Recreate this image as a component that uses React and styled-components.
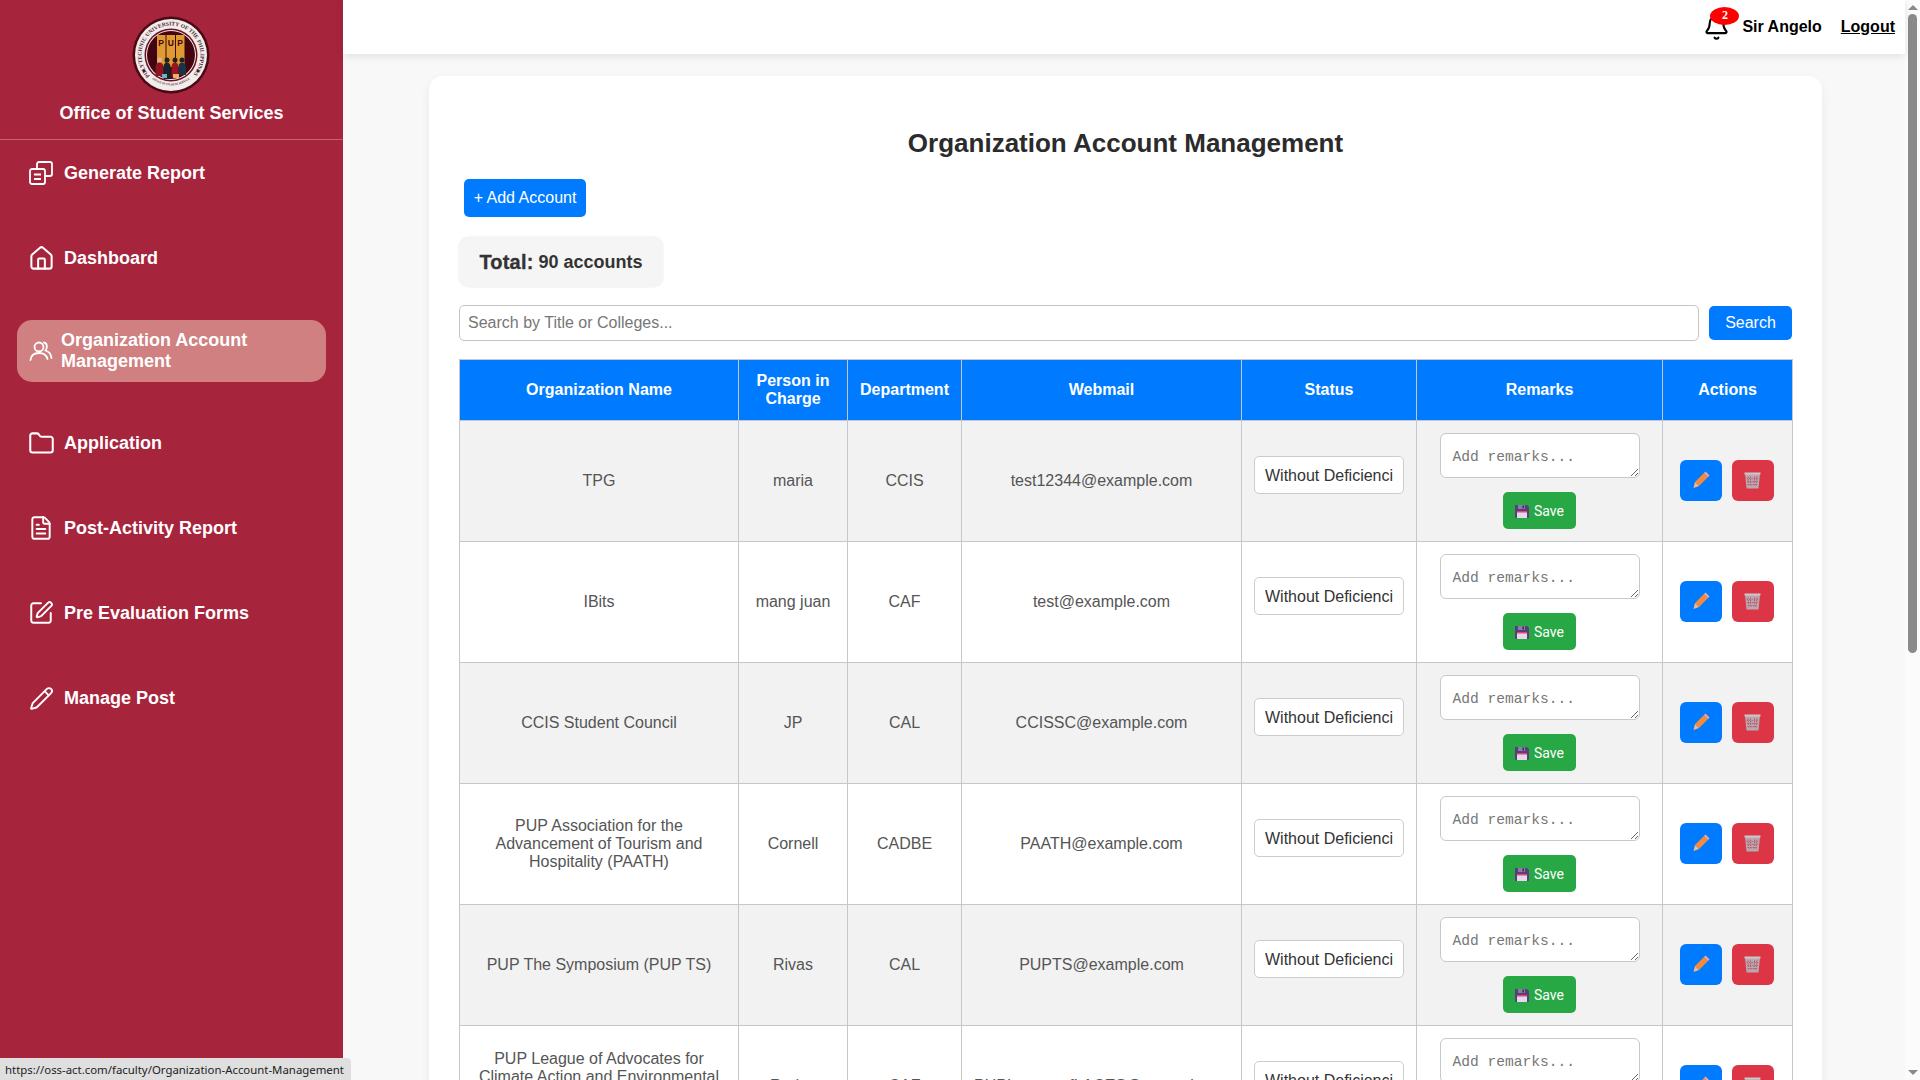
import styled, { createGlobalStyle } from 'styled-components';
import { Bell, FileText, Folder, Home, Pencil, SquarePen } from 'lucide-react';

const GlobalStyle = createGlobalStyle`
  html, body {
    margin: 0;
    height: 100%;
    overflow: hidden;
    font-family: "Liberation Sans", Arial, sans-serif;
  }
  * {
    box-sizing: border-box;
  }
`;

const rows = [
  { name: 'TPG', person: 'maria', dept: 'CCIS', mail: 'test12344@example.com' },
  { name: 'IBits', person: 'mang juan', dept: 'CAF', mail: 'test@example.com' },
  { name: 'CCIS Student Council', person: 'JP', dept: 'CAL', mail: 'CCISSC@example.com' },
  {
    name: 'PUP Association for the Advancement of Tourism and Hospitality (PAATH)',
    person: 'Cornell',
    dept: 'CADBE',
    mail: 'PAATH@example.com',
  },
  { name: 'PUP The Symposium (PUP TS)', person: 'Rivas', dept: 'CAL', mail: 'PUPTS@example.com' },
  {
    name: 'PUP League of Advocates for Climate Action and Environmental Stewardship and Sustainability (PUP LACES)',
    person: 'Rodas',
    dept: 'CAF',
    mail: 'PUPLeagueofLACES@example.com',
  },
];

function ReportIcon() {
  return (
    <svg width="24" height="24" viewBox="0 0 24 24" fill="none" stroke="currentColor" strokeWidth="1.8" strokeLinejoin="round">
      <rect x="1" y="8" width="15" height="15" rx="2" />
      <path d="M8 8V3a2 2 0 0 1 2-2h11a2 2 0 0 1 2 2v10a2 2 0 0 1-2 2h-5" />
      <path d="M5 13.500h7M5 18h7" />
    </svg>
  );
}

function PeopleIcon() {
  return (
    <svg width="24" height="24" viewBox="0 0 24 24" fill="none" stroke="currentColor" strokeWidth="1.8" strokeLinecap="round">
      <circle cx="10" cy="8" r="4.500" />
      <path d="M1.500 21c.5-4.500 4-7 8.500-7s7.500 2 8.500 6" />
      <path d="M15 3.500c3 .5 4 5 1.500 8 3.500 1 5.500 4 6 7.500" />
    </svg>
  );
}

function Logo() {
  return (
    <svg width="78" height="78" viewBox="0 0 78 78">
      <defs>
        <path id="ring" d="M18.100 59.900a29.500 29.500 0 1 1 41.800 0" />
        <path id="ringLow" d="M20 63a31 31 0 0 0 38 0" />
      </defs>
      <circle cx="39" cy="39" r="38.500" fill="#4a0a14" />
      <circle cx="39" cy="39" r="36" fill="#f3ecec" />
      <circle cx="39" cy="39" r="26.500" fill="#6d1020" />
      <circle cx="39" cy="39" r="25" fill="#f3ecec" />
      <circle cx="39" cy="39" r="24" fill="#43050f" />
      <circle cx="12" cy="55" r="1.500" fill="#4a0a14" />
      <circle cx="66" cy="55" r="1.500" fill="#4a0a14" />
      <text fontSize="5.600" fontWeight="700" fill="#4a2a30" fontFamily="Liberation Serif, serif">
        <textPath href="#ring" textLength="136" lengthAdjust="spacingAndGlyphs">POLYTECHNIC UNIVERSITY OF THE PHILIPPINES</textPath>
      </text>
      <text fontSize="3.200" fontWeight="700" fill="#4a2a30" fontFamily="Liberation Serif, serif">
        <textPath href="#ringLow" textLength="42" lengthAdjust="spacingAndGlyphs">OFFICE OF STUDENT SERVICES</textPath>
      </text>
      <rect x="25" y="19" width="8.500" height="32" fill="#e09a32" />
      <rect x="34.500" y="19" width="8.500" height="32" fill="#e09a32" />
      <rect x="44" y="19" width="8.500" height="32" fill="#e09a32" />
      <text x="29.200" y="30" fontSize="8.500" fontWeight="700" textAnchor="middle" fill="#43050f" fontFamily="Liberation Sans, sans-serif">P</text>
      <text x="38.700" y="30" fontSize="8.500" fontWeight="700" textAnchor="middle" fill="#43050f" fontFamily="Liberation Sans, sans-serif">U</text>
      <text x="48.200" y="30" fontSize="8.500" fontWeight="700" textAnchor="middle" fill="#43050f" fontFamily="Liberation Sans, sans-serif">P</text>
      <circle cx="27.500" cy="44" r="2.500" fill="#e2b28e" />
      <path d="M23.500 60v-9c0-3 2-4.500 4-4.500s4 1.500 4 4.500v9z" fill="#8e1420" />
      <circle cx="35" cy="44" r="2.500" fill="#20201f" />
      <path d="M31.500 63v-12c0-3 1.500-4.500 3.500-4.500s3.500 1.500 3.500 4.500v12z" fill="#16252b" />
      <circle cx="43" cy="44" r="2.500" fill="#20201f" />
      <path d="M39.500 61v-10c0-3 1.500-4.500 3.500-4.500s3.500 1.500 3.500 4.500v10z" fill="#99151f" />
      <circle cx="50" cy="44" r="2.500" fill="#20201f" />
      <path d="M46.500 59v-8c0-3 1.500-4.500 3.500-4.500s4 1.500 4 4.500v8z" fill="#1b3346" />
      <rect x="30" y="58" width="5" height="4" fill="#6fb2c8" />
      <rect x="41" y="58" width="6" height="4" fill="#e8b060" />
    </svg>
  );
}

function SaveIcon() {
  return (
    <svg width="14" height="14" viewBox="0 0 14 14">
      <path d="M0 1h12l2 2v10a1 1 0 0 1-1 1H1a1 1 0 0 1-1-1z" fill="#55407a" />
      <rect x="3" y="1" width="7" height="4" fill="#8a7ba8" />
      <rect x="7.500" y="1.500" width="1.500" height="3" fill="#3b2c5a" />
      <rect x="2" y="7" width="10" height="7" fill="#e4d7ee" />
      <rect x="2" y="7" width="10" height="1.500" fill="#e0476a" />
    </svg>
  );
}

function PencilEmoji() {
  return (
    <svg width="18" height="18" viewBox="0 0 18 18">
      <path d="M3 11 12 2l4 4-9 9z" fill="#f58a3c" />
      <path d="M12 2l1.500-1.500 4 4L16 6z" fill="#f4a6a0" />
      <path d="M3 11l4 4-5.500 2z" fill="#f2b98e" />
    </svg>
  );
}

function TrashEmoji() {
  return (
    <svg width="17" height="17" viewBox="0 0 17 17">
      <path d="M1 1.500h15l-1.500 15h-12z" fill="#b9a8ae" />
      <rect x=".5" y=".5" width="16" height="2" fill="#d0c6ca" />
      <path d="M4 4.500l1 10M6.500 4.500l.5 10M10.500 4.500l-.5 10M13 4.500l-1 10" stroke="#b9566a" strokeWidth="1" strokeDasharray="1.500 1" />
      <path d="M2.500 6.500h12M3 9.500h11M3.500 12.500h10" stroke="#b9566a" strokeWidth=".8" strokeDasharray="1.500 1" />
    </svg>
  );
}

function NavItem({ icon, label, active }) {
  return (
    <NavLink $active={active}>
      <NavIcon>{icon}</NavIcon>
      <span>{label}</span>
    </NavLink>
  );
}

function App() {
  return (
    <Screen>
      <GlobalStyle />
      <Sidebar>
        <Brand>
          <Logo />
          <BrandName>Office of Student Services</BrandName>
        </Brand>
        <Nav>
          <NavItem icon={<ReportIcon />} label="Generate Report" />
          <NavItem icon={<Home size={27} strokeWidth={1.8} />} label="Dashboard" />
          <NavItem icon={<PeopleIcon />} label="Organization Account Management" active />
          <NavItem icon={<Folder size={27} strokeWidth={1.8} />} label="Application" />
          <NavItem icon={<FileText size={26} strokeWidth={1.8} />} label="Post-Activity Report" />
          <NavItem icon={<SquarePen size={26} strokeWidth={1.8} />} label="Pre Evaluation Forms" />
          <NavItem icon={<Pencil size={25} strokeWidth={1.8} />} label="Manage Post" />
        </Nav>
      </Sidebar>

      <Main>
        <TopBar>
          <BellWrap>
            <Bell size={27} strokeWidth={1.8} />
            <BellBadge>2</BellBadge>
          </BellWrap>
          <UserName>Sir Angelo</UserName>
          <LogoutLink>Logout</LogoutLink>
        </TopBar>

        <Content>
          <Card>
            <Title>Organization Account Management</Title>
            <AddButton>+ Add Account</AddButton>
            <TotalBox>
              <strong>Total:</strong> 90 accounts
            </TotalBox>
            <SearchRow>
              <SearchInput placeholder="Search by Title or Colleges..." />
              <SearchButton>Search</SearchButton>
            </SearchRow>
            <Table>
              <colgroup>
                <col style={{ width: 279 }} />
                <col style={{ width: 109 }} />
                <col style={{ width: 114 }} />
                <col style={{ width: 280 }} />
                <col style={{ width: 175 }} />
                <col style={{ width: 246 }} />
                <col style={{ width: 130 }} />
              </colgroup>
              <thead>
                <tr>
                  <Th>Organization Name</Th>
                  <Th>Person in Charge</Th>
                  <Th>Department</Th>
                  <Th>Webmail</Th>
                  <Th>Status</Th>
                  <Th>Remarks</Th>
                  <Th>Actions</Th>
                </tr>
              </thead>
              <tbody>
                {rows.map((row) => (
                  <Row key={row.mail}>
                    <Td>{row.name}</Td>
                    <Td>{row.person}</Td>
                    <Td>{row.dept}</Td>
                    <Td>{row.mail}</Td>
                    <Td>
                      <StatusSelect defaultValue="none">
                        <option value="none">Without Deficiencies</option>
                      </StatusSelect>
                    </Td>
                    <Td>
                      <RemarksBox placeholder="Add remarks..." />
                      <SaveButton>
                        <SaveIcon />
                        Save
                      </SaveButton>
                    </Td>
                    <Td>
                      <Actions>
                        <ActionButton $color="#007bff">
                          <PencilEmoji />
                        </ActionButton>
                        <ActionButton $color="#dc3545">
                          <TrashEmoji />
                        </ActionButton>
                      </Actions>
                    </Td>
                  </Row>
                ))}
              </tbody>
            </Table>
          </Card>
        </Content>
      </Main>

      <Scrollbar>
        <ArrowUp />
        <ScrollThumb />
        <ArrowDown />
      </Scrollbar>

      <LinkStatus>https://oss-act.com/faculty/Organization-Account-Management</LinkStatus>
    </Screen>
  );
}

export default App;

const Screen = styled.div`
  display: flex;
  height: 100vh;
  overflow: hidden;
  background: #f8f8f8;
`;

const Sidebar = styled.aside`
  flex: 0 0 343px;
  background: #a6243c;
  color: #fff;
`;

const Brand = styled.div`
  height: 140px;
  padding: 16px 1px 0 0;
  display: flex;
  flex-direction: column;
  align-items: center;
  border-bottom: 1px solid #c9606f;
`;

const BrandName = styled.div`
  margin-top: 9px;
  margin-right: -1px;
  font-size: 18px;
  font-weight: 700;
`;

const Nav = styled.nav`
  padding: 10px 17px 0;
  display: flex;
  flex-direction: column;
  gap: 39px;
`;

const NavLink = styled.a`
  display: flex;
  align-items: center;
  gap: ${(props) => (props.$active ? '8px' : '11px')};
  height: ${(props) => (props.$active ? '62px' : '46px')};
  margin-bottom: ${(props) => (props.$active ? '-1px' : '0')};
  padding: 0 12px;
  border-radius: 15px;
  background: ${(props) => (props.$active ? '#d08080' : 'transparent')};
  color: #fff;
  font-size: 18px;
  font-weight: 700;
  line-height: 21px;
`;

const NavIcon = styled.span`
  flex: 0 0 24px;
  min-width: 0;
  width: 24px;
  display: flex;
  justify-content: center;

  svg {
    flex: 0 0 auto;
  }
`;

const Main = styled.main`
  flex: 1;
  min-width: 0;
  display: flex;
  flex-direction: column;
`;

const TopBar = styled.header`
  flex: 0 0 54px;
  background: #fff;
  box-shadow: 0 2px 8px rgba(0, 0, 0, 0.1);
  display: flex;
  align-items: center;
  justify-content: flex-end;
  padding: 0 10px 0 0;
  position: relative;
  z-index: 1;
`;

const BellWrap = styled.div`
  position: relative;
  display: flex;
  color: #000;
  margin-right: 12px;
`;

const BellBadge = styled.span`
  position: absolute;
  top: -7px;
  left: 7px;
  width: 29px;
  height: 18px;
  border-radius: 50%;
  background: #f00;
  color: #fff;
  font-size: 12px;
  font-weight: 700;
  font-family: "Liberation Serif", serif;
  display: flex;
  align-items: center;
  justify-content: center;
`;

const UserName = styled.span`
  font-size: 16px;
  font-weight: 700;
  color: #000;
  margin-right: 19px;
`;

const LogoutLink = styled.a`
  font-size: 16px;
  font-weight: 700;
  color: #000;
  text-decoration: underline;
`;

const Content = styled.div`
  flex: 1;
  min-height: 0;
  overflow: hidden;
  padding: 22px 83px 0 86px;
`;

const Card = styled.section`
  background: #fff;
  border-radius: 14px;
  box-shadow: 0 4px 12px rgba(0, 0, 0, 0.06);
  padding: 49px 30px 30px;
`;

const Title = styled.h1`
  margin: 0 0 18px;
  font-size: 26px;
  line-height: 36px;
  font-weight: 700;
  color: #2b2b2b;
  text-align: center;
`;

const AddButton = styled.button`
  display: block;
  margin-left: 5px;
  width: 122px;
  height: 38px;
  padding: 0;
  border: 0;
  border-radius: 5px;
  background: #007bff;
  color: #fff;
  font-family: inherit;
  font-size: 16px;
`;

const TotalBox = styled.div`
  width: 204px;
  height: 50px;
  margin-top: 20px;
  border-radius: 10px;
  background: #f5f5f5;
  box-shadow: 0 0 2px rgba(0, 0, 0, 0.12);
  display: flex;
  align-items: center;
  justify-content: center;
  gap: 5px;
  color: #333;
  font-size: 18px;
  font-weight: 700;

  strong {
    font-size: 20px;
    letter-spacing: 0.2px;
    -webkit-text-stroke: 0.3px #333;
  }
`;

const SearchRow = styled.div`
  display: flex;
  align-items: center;
  gap: 10px;
  margin-top: 18px;
`;

const SearchInput = styled.input`
  flex: 1;
  height: 36px;
  padding: 0 8px;
  border: 1px solid #c4c4c4;
  border-radius: 5px;
  font-family: inherit;
  font-size: 16px;

  &::placeholder {
    color: #777;
  }
`;

const SearchButton = styled.button`
  flex: 0 0 83px;
  height: 34px;
  border: 0;
  border-radius: 5px;
  background: #007bff;
  color: #fff;
  font-family: inherit;
  font-size: 16px;
`;

const Table = styled.table`
  width: 1333px;
  margin-top: 18px;
  table-layout: fixed;
  border-collapse: collapse;
`;

const Th = styled.th`
  height: 61px;
  padding: 0 12px;
  background: #007bff;
  border: 1px solid #c3c8cc;
  color: #fff;
  font-size: 16px;
  font-weight: 700;
  text-align: center;
`;

const Row = styled.tr`
  &:nth-child(odd) {
    background: #f2f2f2;
  }
  &:nth-child(even) {
    background: #fff;
  }
`;

const Td = styled.td`
  height: 121px;
  padding: 12px;
  border: 1px solid #c3c8cc;
  color: #555;
  font-size: 16px;
  text-align: center;
  vertical-align: middle;
`;

const StatusSelect = styled.select`
  display: block;
  width: 150px;
  height: 38px;
  margin-top: -12px;
  padding: 0 10px;
  border: 1px solid #ccc;
  border-radius: 5px;
  background: #fff;
  color: #333;
  font-family: inherit;
  font-size: 16px;
  appearance: none;
`;

const RemarksBox = styled.textarea`
  display: block;
  width: 200px;
  height: 45px;
  margin: 0 auto;
  padding: 14px 12px 0;
  border: 1px solid #c8c8c8;
  border-radius: 6px;
  font-family: "Liberation Mono", "DejaVu Sans Mono", monospace;
  font-size: 14.6px;
  line-height: 18px;

  &::placeholder {
    color: #777;
  }
`;

const SaveButton = styled.button`
  display: flex;
  align-items: center;
  justify-content: center;
  gap: 5px;
  width: 73px;
  height: 37px;
  margin: 14px auto 0;
  border: 0;
  border-radius: 5px;
  background: #28a745;
  color: #fff;
  font-family: Roboto, sans-serif;
  font-size: 14px;
  font-weight: 400;
`;

const Actions = styled.div`
  display: flex;
  justify-content: center;
  gap: 10px;
  margin-top: -2px;
  padding-right: 2px;
`;

const ActionButton = styled.button`
  width: 42px;
  height: 41px;
  padding: 0;
  border: 0;
  border-radius: 6px;
  background: ${(props) => props.$color};
  display: flex;
  align-items: center;
  justify-content: center;
`;

const Scrollbar = styled.div`
  flex: 0 0 15px;
  background: #fbfbfb;
  display: flex;
  flex-direction: column;
  align-items: center;
`;

const ArrowUp = styled.div`
  margin: 5px 0 4px;
  border-left: 5px solid transparent;
  border-right: 5px solid transparent;
  border-bottom: 5px solid #8a8a8a;
`;

const ScrollThumb = styled.div`
  width: 9px;
  height: 639px;
  border-radius: 5px;
  background: #8a8a8a;
`;

const ArrowDown = styled.div`
  margin-top: auto;
  margin-bottom: 5px;
  border-left: 5px solid transparent;
  border-right: 5px solid transparent;
  border-top: 5px solid #8a8a8a;
`;

const LinkStatus = styled.div`
  position: fixed;
  left: 0;
  bottom: 0;
  width: 351px;
  height: 22px;
  padding-left: 5px;
  background: #dfdfdf;
  border-top-right-radius: 4px;
  color: #222;
  font-family: "Noto Sans", sans-serif;
  font-size: 11.4px;
  line-height: 23px;
  white-space: nowrap;
  overflow: hidden;
`;
